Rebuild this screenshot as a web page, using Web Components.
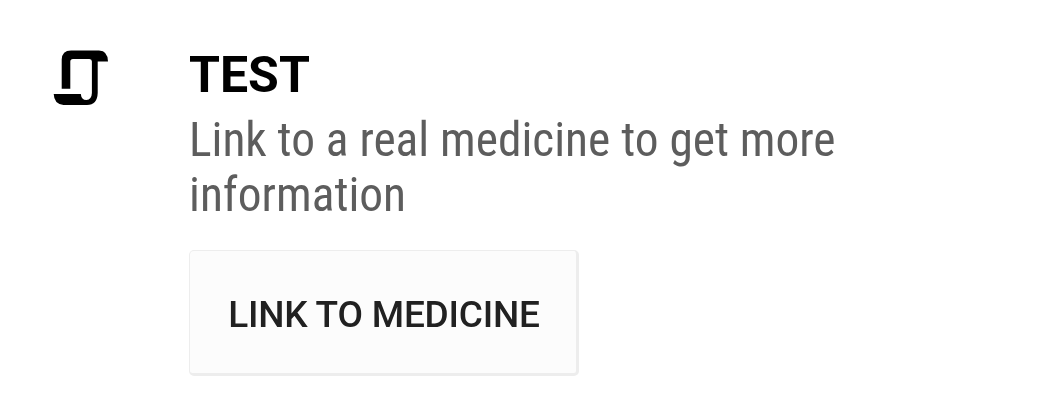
<!DOCTYPE html>
<html lang="en"><head><meta charset="utf-8"><title>Medicine</title>
<style>body{margin:0;background:#fff;font-family:Roboto,"Liberation Sans",sans-serif}</style></head>
<body>
<medicine-entry><script-icon slot="icon"></script-icon><span slot="title">TEST</span><condensed-text slot="description"><span>Link to a real medicine to get more</span><span>information</span></condensed-text><link-button slot="action">LINK TO MEDICINE</link-button></medicine-entry>
<script>
const define=(name,html)=>customElements.define(name,class extends HTMLElement{constructor(){super();this.attachShadow({mode:'open'}).innerHTML=html}});
define('script-icon',`<style>:host{display:block;width:56px;height:56px}svg{display:block}</style>
<svg width="56" height="56" viewBox="0 0 56 56"><path fill="#000" d="M8.7 38.7V9.5Q9 .4 18 .4H46Q55 .8 55 11.6H44.7V43Q44.3 55 34 55H10.5Q1 54 .7 44H27.8Q28.4 50 33.4 50Q38.7 49.5 38.9 43V11.5Q38.9 9 36.5 9H20Q17.3 9 17.3 11.5V38.7Z"/></svg>`);
define('condensed-text',`<style>:host{display:flex;flex-direction:column;align-items:flex-start;font-size:47.4px;line-height:55px;color:#5d5d5d;font-family:"Roboto Condensed",Roboto,sans-serif;font-stretch:75%;white-space:nowrap}</style><slot></slot>`);
define('link-button',`<style>:host{display:block}button{display:block;box-sizing:border-box;width:390px;height:126px;padding:6px 0 0 2px;border:1px solid #ededed;border-right:3px solid #ededed;border-bottom:3px solid #ededed;border-radius:5px;background:#fcfcfc;color:#212121;font:500 37px/44px Roboto,"Liberation Sans",sans-serif;letter-spacing:-.2px}</style><button><slot></slot></button>`);
define('medicine-entry',`<style>:host{display:grid;grid-template-columns:136px 1fr;box-sizing:border-box;height:415px;padding:45px 0 0 53px;overflow:hidden;will-change:transform}.i{padding-top:5px}.t{font-size:50px;font-weight:700;line-height:60px}.d{margin-top:8px;height:110px}.a{margin-top:27px}</style><div class="i"><slot name="icon"></slot></div><div class="b"><div class="t"><slot name="title"></slot></div><div class="d"><slot name="description"></slot></div><div class="a"><slot name="action"></slot></div></div>`);
</script></body></html>
